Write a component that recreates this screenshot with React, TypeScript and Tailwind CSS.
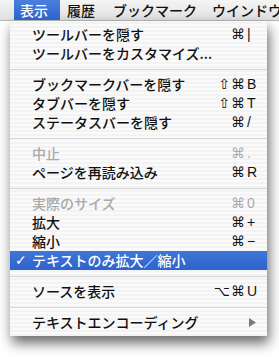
import React from "react";

type Row =
  | { sep: true }
  | {
      sep?: false;
      label: string;
      mods?: string;
      k?: string;
      disabled?: boolean;
      checked?: boolean;
      hi?: boolean;
      submenu?: boolean;
    };

const rows: Row[] = [
  { label: "ツールバーを隠す", mods: "⌘", k: "|" },
  { label: "ツールバーをカスタマイズ..." },
  { sep: true },
  { label: "ブックマークバーを隠す", mods: "⇧⌘", k: "B" },
  { label: "タブバーを隠す", mods: "⇧⌘", k: "T" },
  { label: "ステータスバーを隠す", mods: "⌘", k: "/" },
  { sep: true },
  { label: "中止", mods: "⌘", k: ".", disabled: true },
  { label: "ページを再読み込み", mods: "⌘", k: "R" },
  { sep: true },
  { label: "実際のサイズ", mods: "⌘", k: "0", disabled: true },
  { label: "拡大", mods: "⌘", k: "+" },
  { label: "縮小", mods: "⌘", k: "−" },
  { label: "テキストのみ拡大／縮小", checked: true, hi: true },
  { sep: true },
  { label: "ソースを表示", mods: "⌥⌘", k: "U" },
  { sep: true },
  { label: "テキストエンコーディング", submenu: true },
];

export default function App() {
  return (
    <div className="w-[279px] h-[357px] overflow-hidden bg-white font-['Noto_Sans_CJK_JP',sans-serif] font-medium text-[14px] text-[#111]">
      {/* menu bar */}
      <div className="h-[21px] flex items-stretch overflow-hidden bg-[linear-gradient(#f5f5f5,#e0e0e0)] border-b border-[#b9b9b9] leading-[20px]">
        <div className="w-[14px] shrink-0" />
        <span className="shrink-0 whitespace-nowrap pl-[6px] pr-[12px] bg-[linear-gradient(#4a80dc,#2c63cb)] text-white">表示</span>
        <span className="shrink-0 whitespace-nowrap pl-[7px] pr-[9px]">履歴</span>
        <span className="shrink-0 whitespace-nowrap pl-[9px] pr-[7px]">ブックマーク</span>
        <span className="shrink-0 whitespace-nowrap pl-[8px]">ウインドウ</span>
      </div>

      {/* dropdown */}
      <div className="ml-[10px] w-[257px] pt-[4px] pb-[4px] bg-[repeating-linear-gradient(0deg,#f3f3f3_0px,#f3f3f3_2px,#fafafa_2px,#fafafa_4px)] shadow-[2px_7px_12px_rgba(0,0,0,0.6)]">
        {rows.map((r, i) =>
          r.sep ? (
            <div key={i} className="h-[12px] flex items-center">
              <div className="w-full h-px bg-[#d6d6d6]" />
            </div>
          ) : (
            <div
              key={i}
              className={
                "h-[19px] flex items-center leading-[19px] " +
                (r.hi
                  ? "bg-[linear-gradient(#3f76d8,#2d63cb)] text-white"
                  : r.disabled
                  ? "text-[#a9a9a9]"
                  : "text-[#111]")
              }
            >
              <span className="w-[22px] shrink-0 pl-[5px] text-[14px] font-bold font-['DejaVu_Sans',sans-serif]">
                {r.checked ? "✓" : ""}
              </span>
              <span className="flex-1 whitespace-nowrap">{r.label}</span>
              {r.submenu ? (
                <span className="w-[21px] shrink-0 flex items-center">
                  <svg width="7" height="9" viewBox="0 0 7 9" className="ml-[3px]">
                    <path d="M0 0 L7 4.5 L0 9 Z" fill="#7a7a7a" />
                  </svg>
                </span>
              ) : (
                <span className="shrink-0 flex items-center pr-[9px] font-['Liberation_Sans','DejaVu_Sans',sans-serif] text-[14px]">
                  <span className="text-right font-['DejaVu_Sans',sans-serif] font-normal text-[14px] tracking-[1px]">
                    {r.mods ?? ""}
                  </span>
                  <span className="w-[12px] pl-[1px]">{r.k ?? ""}</span>
                </span>
              )}
            </div>
          )
        )}
      </div>
    </div>
  );
}
